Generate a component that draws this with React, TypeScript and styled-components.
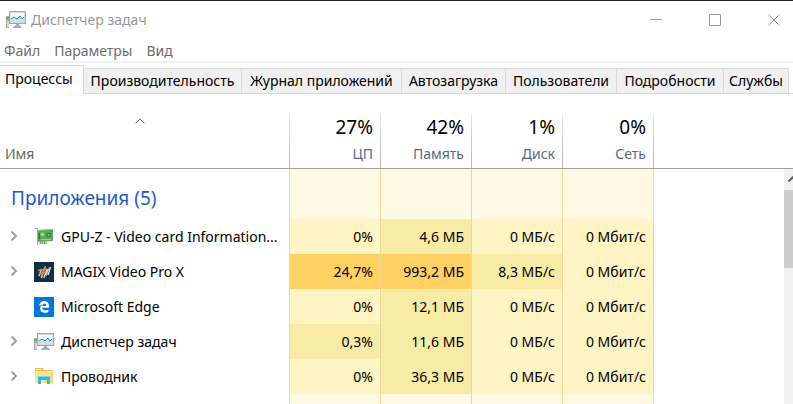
import React from "react";
import styled, { createGlobalStyle } from "styled-components";

const GlobalStyle = createGlobalStyle`
  *, *::before, *::after { box-sizing: border-box; }
  body { margin: 0; background: #fff; }
  body, button { font-family: "Noto Sans", "Open Sans", sans-serif; font-size: 14px; line-height: 20px; color: #000; }
  button { border: 0; padding: 0; margin: 0; background: none; }
`;

const Window = styled.div`
  display: flex;
  flex-direction: column;
  min-height: 100vh;
  overflow: hidden;
  border-top: 1px solid #222;
`;

const TitleBar = styled.header`
  display: flex;
  align-items: center;
  height: 38px;
  padding: 0 13px 0 6px;
`;

const Title = styled.h1`
  flex: 1;
  margin: 0 0 0 5px;
  font-size: 14px;
  font-weight: 400;
  color: #999;
`;

const WindowControls = styled.div`
  display: flex;
  gap: 47px;
`;

const ControlButton = styled.button`
  display: flex;
  width: 12px;
  height: 14px;
  align-items: center;
`;

const MenuBar = styled.nav`
  display: flex;
  gap: 14px;
  height: 24px;
  padding: 2px 4px 0;
  border-bottom: 2px solid #f0f0f0;
`;

const MenuButton = styled.button`
  color: #6d6d6d;
`;

const TabList = styled.div`
  display: flex;
  align-items: flex-end;
  height: 31px;
  padding-top: 3px;
  border-bottom: 1px solid #d9d9d9;
`;

const Tab = styled.button<{ $width: number; $active?: boolean }>`
  flex: 0 0 auto;
  width: ${(p) => p.$width}px;
  height: ${(p) => (p.$active ? 29 : 25)}px;
  margin-bottom: ${(p) => (p.$active ? -1 : 0)}px;
  padding: ${(p) => (p.$active ? "0 0 2px 5px" : "0")};
  border-top: 1px solid #d9d9d9;
  border-right: 1px solid #d9d9d9;
  background: ${(p) => (p.$active ? "#fff" : "#f0f0f0")};
  text-align: ${(p) => (p.$active ? "left" : "center")};
  white-space: nowrap;
`;

const Content = styled.main`
  display: flex;
  flex: 1;
  padding-top: 20px;
`;

const ProcessTable = styled.table`
  flex: 1;
  min-width: 0;
  table-layout: fixed;
  border-collapse: separate;
  border-spacing: 0;
`;

const NameCol = styled.col`
  width: 289px;
`;

const MetricCol = styled.col`
  width: 91px;
`;

const HeadCell = styled.th<{ $lined?: boolean }>`
  height: 55px;
  padding: 0 7px 4px 5px;
  border-bottom: 1px solid #a0a0a0;
  background: ${(p) =>
    p.$lined ? "linear-gradient(#e8e8e8, #b4b4b4) left / 1px 100% no-repeat" : "none"};
  font-weight: 400;
  text-align: ${(p) => (p.$lined ? "right" : "left")};
  vertical-align: bottom;
  color: #5a6b82;
`;

const NameHeading = styled.div`
  display: flex;
  flex-direction: column;
  gap: 20px;
  color: #666;
`;

const SortMark = styled.svg`
  align-self: center;
  margin-right: 8px;
`;

const Total = styled.div`
  padding-bottom: 4px;
  font-size: 19px;
  line-height: 26px;
  color: #000;
`;

const GroupCell = styled.th`
  height: 50px;
  padding: 8px 0 0 11px;
  font-size: 19px;
  font-weight: 400;
  line-height: 26px;
  text-align: left;
  color: #1f5ac8;
`;

const ProcessCell = styled.th`
  height: 35px;
  padding: 0 7px 0 8px;
  font-weight: 400;
  text-align: left;
`;

const ProcessLabel = styled.div`
  display: grid;
  grid-template-columns: 11px 20px minmax(0, 1fr);
  column-gap: 15px;
  align-items: center;
`;

const ProcessName = styled.span`
  margin-left: -8px;
  white-space: nowrap;
`;

const ExpandButton = styled.button`
  display: flex;
  justify-content: center;
  padding-bottom: 2px;
`;

const heatColors = ["#fff8e2", "#fff4c4", "#f8eba6", "#ffd163"];

const MetricCell = styled.td<{ $heat: number }>`
  padding: 0 7px 0 0;
  border-left: 1px solid #ead7a0;
  background: ${(p) => heatColors[p.$heat]};
  text-align: right;
  white-space: nowrap;
`;

const FillerCell = styled.td`
  border-left: 1px solid #ead7a0;
`;

const Scroll = styled.div`
  display: flex;
  flex-direction: column;
  flex: 0 0 9px;
  overflow: hidden;
`;

const ScrollHead = styled.div`
  height: 55px;
  border-bottom: 1px solid #a0a0a0;
`;

const ScrollTrack = styled.div`
  flex: 1;
  background: #f0f0f0;
`;

const ScrollButton = styled.button`
  display: flex;
  align-items: center;
  height: 21px;
`;

const ScrollThumb = styled.div`
  height: 78px;
  background: #cdcdcd;
`;

const MonitorIcon = () => (
  <svg width="20" height="20" viewBox="0 0 20 20" aria-hidden="true">
    <path d="M0 6h3v12H0z" fill="#a9abad" />
    <path d="M0 7h3v2H0z" fill="#3fca3a" />
    <path d="M1 11h2v6H1z" fill="#d2d4d5" />
    <path d="M3 1h17v13H3z" fill="#a4a7a9" />
    <path d="M4 2h15v11H4z" fill="#d6d8d9" />
    <path d="M5 3h13v9H5z" fill="#f2fafe" />
    <path d="M5 9l3-2 3 2 3-3 2 3 2-1v4H5z" fill="#c3e7f8" />
    <path d="M5 9l3-2 3 2 3-3 2 3 2-2" fill="none" stroke="#2386be" />
    <path d="M10 14h3v1l3 2v1H7v-1l3-2z" fill="#a9acae" />
  </svg>
);

const GpuIcon = () => (
  <svg width="20" height="20" viewBox="0 0 20 20" aria-hidden="true">
    <path d="M1 1h3v17H3V2H1z" fill="#a7aaac" />
    <path d="M4 3l15-1v12L4 15z" fill="#55a65a" />
    <path d="M4 3l15-1v1L4 4z" fill="#8cc785" />
    <path d="M4 6h2v6H4z" fill="#34843c" />
    <circle cx="8.500" cy="7.500" r="2" fill="#8cdb80" />
    <path d="M13 6h4v4h-4z" fill="#3c8443" />
    <path d="M14 7h2v2h-2z" fill="#6aba65" />
    <path d="M7 12h10v1H7z" fill="#9bd195" />
    <path d="M5 14h8v3H5z" fill="#cbc696" />
    <path d="M6.500 14v3m2-3v3m2-3v3" stroke="#88945f" />
    <path d="M13 13h6v1h-6z" fill="#6d9c67" />
  </svg>
);

const MagixIcon = () => (
  <svg width="20" height="20" viewBox="0 0 20 20" aria-hidden="true">
    <path d="M0 0h20v20H0z" fill="#102f49" />
    <path d="M7.500 7L5 14m5-7l-2.500 9m5-8L10 16m4-9l-2 6m4.500-8L14 13" stroke="#e3ddd5" strokeWidth="1.400" />
    <path d="M11.500 4L7 15M4 8.500l9-1.500m-8 5l7-2" stroke="#d98b48" strokeWidth="1.500" />
    <path d="M15.500 5L12 14" stroke="#c9b09a" />
  </svg>
);

const EdgeIcon = () => (
  <svg width="20" height="20" viewBox="0 0 20 20" aria-hidden="true">
    <path d="M0 0h20v20H0z" fill="#0078d7" />
    <path
      d="M5 9.200C5.500 6 7.400 4 10.200 4C13.400 4 15 6.400 15 9.200V10.700H8.300C8.400 12.600 9.700 13.300 11.300 13.300C12.500 13.300 13.500 13 14.400 12.400V14.900C13.400 15.500 12.200 15.800 10.900 15.800C8 15.800 6.100 14 6.100 11.400C6.100 9.400 7.200 8.100 8.500 7.400C7 7.500 5.800 8.200 5 9.200ZM8.400 8.900H12.200C12.200 7.500 11.600 6.600 10.400 6.600C9.300 6.600 8.600 7.500 8.400 8.900Z"
      fill="#fff"
    />
  </svg>
);

const FolderIcon = () => (
  <svg width="20" height="20" viewBox="0 0 20 20" aria-hidden="true">
    <path d="M1 1h8l1 2h9v13H1z" fill="#f3c556" />
    <path d="M2 2h5v1H2z" fill="#fff3c8" />
    <path d="M1 4h18v12H1z" fill="#ffe292" />
    <path d="M19 4v12h-9z" fill="#fbd671" />
    <path d="M4 9h12v8h-3v-4H7v4H4z" fill="#2fb6ee" />
    <path d="M4 9h12v1H4z" fill="#79d3f5" />
  </svg>
);

const tabs: [string, number][] = [
  ["Процессы", 84],
  ["Производительность", 158],
  ["Журнал приложений", 160],
  ["Автозагрузка", 104],
  ["Пользователи", 111],
  ["Подробности", 107],
  ["Службы", 65],
];

const metrics = [
  ["27%", "ЦП"],
  ["42%", "Память"],
  ["1%", "Диск"],
  ["0%", "Сеть"],
];

type Process = {
  name: string;
  icon: () => React.ReactElement;
  expandable: boolean;
  values: [string, number][];
};

const processes: Process[] = [
  {
    name: "GPU-Z - Video card Information...",
    icon: GpuIcon,
    expandable: true,
    values: [["0%", 1], ["4,6 МБ", 2], ["0 МБ/с", 1], ["0 Мбит/с", 1]],
  },
  {
    name: "MAGIX Video Pro X",
    icon: MagixIcon,
    expandable: true,
    values: [["24,7%", 3], ["993,2 МБ", 3], ["8,3 МБ/с", 2], ["0 Мбит/с", 1]],
  },
  {
    name: "Microsoft Edge",
    icon: EdgeIcon,
    expandable: false,
    values: [["0%", 1], ["12,1 МБ", 2], ["0 МБ/с", 1], ["0 Мбит/с", 1]],
  },
  {
    name: "Диспетчер задач",
    icon: MonitorIcon,
    expandable: true,
    values: [["0,3%", 2], ["11,6 МБ", 2], ["0 МБ/с", 1], ["0 Мбит/с", 1]],
  },
  {
    name: "Проводник",
    icon: FolderIcon,
    expandable: true,
    values: [["0%", 1], ["36,3 МБ", 2], ["0 МБ/с", 1], ["0 Мбит/с", 1]],
  },
];

const controls = [
  ["Свернуть", "M0 5.500h12"],
  ["Развернуть", "M.5.5h11v11H.5z"],
  ["Закрыть", "M.5.5l11 11M11.500.5l-11 11"],
];

export default function App() {
  return (
    <Window>
      <GlobalStyle />
      <TitleBar>
        <MonitorIcon />
        <Title>Диспетчер задач</Title>
        <WindowControls>
          {controls.map(([label, path]) => (
            <ControlButton key={label} type="button" aria-label={label}>
              <svg width="12" height="12" viewBox="0 0 12 12" fill="none" stroke="#999">
                <path d={path} />
              </svg>
            </ControlButton>
          ))}
        </WindowControls>
      </TitleBar>
      <MenuBar>
        {["Файл", "Параметры", "Вид"].map((item) => (
          <MenuButton key={item} type="button">{item}</MenuButton>
        ))}
      </MenuBar>
      <TabList role="tablist">
        {tabs.map(([label, width], i) => (
          <Tab key={label} type="button" role="tab" aria-selected={i === 0} $active={i === 0} $width={width}>
            {label}
          </Tab>
        ))}
      </TabList>
      <Content>
        <ProcessTable>
          <colgroup>
            <NameCol />
            {metrics.map(([, label]) => <MetricCol key={label} />)}
            <col />
          </colgroup>
          <thead>
            <tr>
              <HeadCell scope="col" aria-sort="ascending">
                <NameHeading>
                  <SortMark width="10" height="6" viewBox="0 0 10 6" fill="none" stroke="#666" aria-hidden="true">
                    <path d="M.5 5.500L5 1l4.500 4.500" />
                  </SortMark>
                  <span>Имя</span>
                </NameHeading>
              </HeadCell>
              {metrics.map(([total, label]) => (
                <HeadCell key={label} scope="col" $lined>
                  <Total>{total}</Total>
                  {label}
                </HeadCell>
              ))}
              <HeadCell as="td" $lined />
            </tr>
          </thead>
          <tbody>
            <tr>
              <GroupCell scope="rowgroup">Приложения (5)</GroupCell>
              {metrics.map(([, label]) => <MetricCell key={label} $heat={0} />)}
              <FillerCell />
            </tr>
            {processes.map(({ name, icon: Icon, expandable, values }) => (
              <tr key={name}>
                <ProcessCell scope="row">
                  <ProcessLabel>
                    {expandable ? (
                      <ExpandButton type="button" aria-label={`Развернуть: ${name}`}>
                        <svg width="8" height="12" viewBox="0 0 8 12" fill="none" stroke="#a0a0a0" strokeWidth="2">
                          <path d="M1.500 1.500L6 6l-4.500 4.500" />
                        </svg>
                      </ExpandButton>
                    ) : (
                      <span />
                    )}
                    <Icon />
                    <ProcessName>{name}</ProcessName>
                  </ProcessLabel>
                </ProcessCell>
                {values.map(([value, heat], i) => (
                  <MetricCell key={metrics[i][1]} $heat={heat}>{value}</MetricCell>
                ))}
                <FillerCell />
              </tr>
            ))}
            <tr>
              <td />
              {metrics.map(([, label]) => <MetricCell key={label} $heat={0} />)}
              <FillerCell />
            </tr>
          </tbody>
        </ProcessTable>
        <Scroll>
          <ScrollHead />
          <ScrollTrack>
            <ScrollButton type="button" aria-label="Прокрутить вверх">
              <svg width="17" height="17" viewBox="0 0 17 17" fill="none" stroke="#606060" strokeWidth="2">
                <path d="M4.500 10.500l4-4 4 4" />
              </svg>
            </ScrollButton>
            <ScrollThumb />
          </ScrollTrack>
        </Scroll>
      </Content>
    </Window>
  );
}
